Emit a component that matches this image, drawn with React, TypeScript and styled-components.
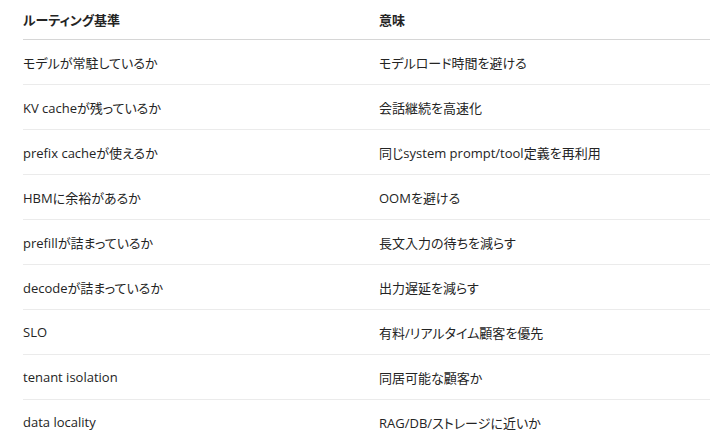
import * as React from 'react';
import styled, { createGlobalStyle } from 'styled-components';

const DocStyle = createGlobalStyle`
  html,
  body {
    margin: 0;
    background: #ffffff;
    color: #242424;
    font-family: 'Open Sans', 'Noto Sans CJK JP', sans-serif;
    font-size: 13px;
    font-feature-settings: 'palt';
  }
`;

const Page = styled.div`
  padding: 0 0 0 23px;
  overflow: hidden;
  width: 710px;
  box-sizing: border-box;
`;

const Table = styled.div`
  display: grid;
  grid-template-columns: 356px 380px;
  width: 736px;
`;

const Row = styled.div`
  display: contents;
`;

const HeadCell = styled.div`
  height: 39px;
  display: flex;
  align-items: center;
  font-weight: 700;
  border-bottom: 1px solid #d6d6d6;
`;

const Cell = styled.div<{ $last?: boolean }>`
  height: 44px;
  display: flex;
  align-items: center;
  border-bottom: ${p => (p.$last ? 'none' : '1px solid #ebebeb')};
  white-space: nowrap;
`;

const rows: [string, string][] = [
  ['モデルが常駐しているか', 'モデルロード時間を避ける'],
  ['KV cacheが残っているか', '会話継続を高速化'],
  ['prefix cacheが使えるか', '同じsystem prompt/tool定義を再利用'],
  ['HBMに余裕があるか', 'OOMを避ける'],
  ['prefillが詰まっているか', '長文入力の待ちを減らす'],
  ['decodeが詰まっているか', '出力遅延を減らす'],
  ['SLO', '有料/リアルタイム顧客を優先'],
  ['tenant isolation', '同居可能な顧客か'],
  ['data locality', 'RAG/DB/ストレージに近いか'],
];

export default function App() {
  return (
    <>
      <DocStyle />
      <Page>
        <Table>
          <Row>
            <HeadCell>ルーティング基準</HeadCell>
            <HeadCell>意味</HeadCell>
          </Row>
          {rows.map(([criterion, meaning], i) => (
            <Row key={criterion}>
              <Cell $last={i === rows.length - 1}>{criterion}</Cell>
              <Cell $last={i === rows.length - 1}>{meaning}</Cell>
            </Row>
          ))}
        </Table>
      </Page>
    </>
  );
}
